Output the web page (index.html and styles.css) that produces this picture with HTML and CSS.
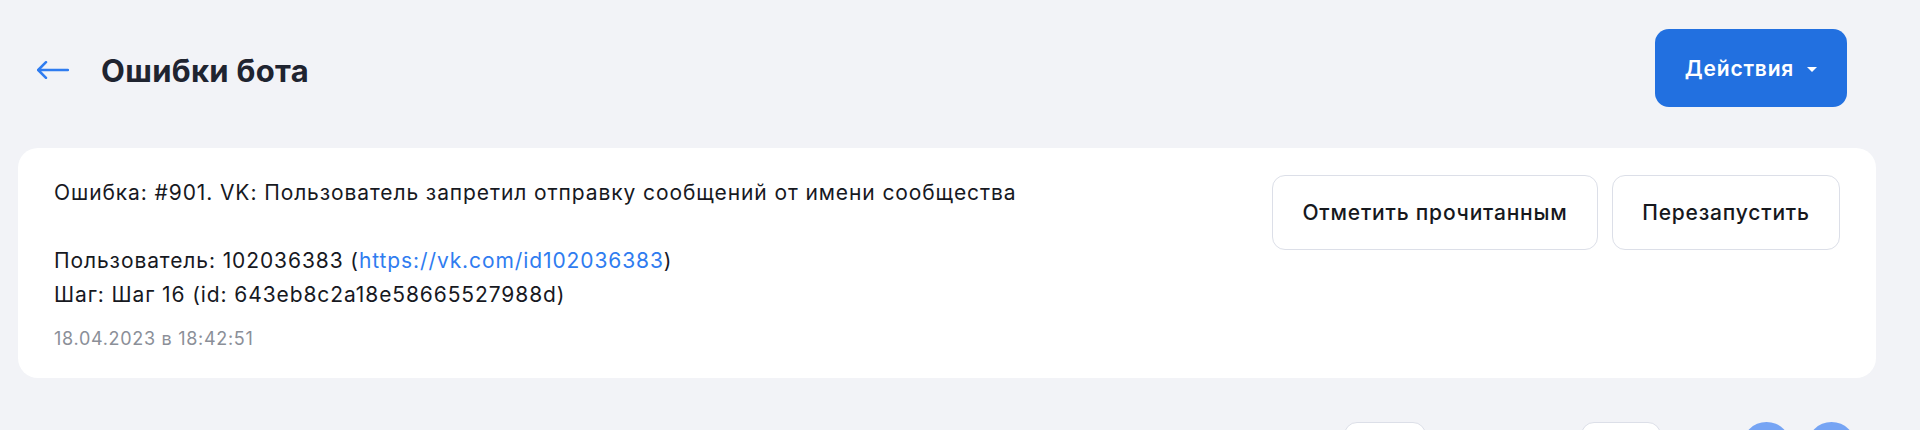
FILE: index.html
```html
<!DOCTYPE html>
<html lang="ru">
<head>
<meta charset="utf-8">
<title>Ошибки бота</title>
<link rel="stylesheet" href="styles.css">
</head>
<body>
<div class="page">
  <header class="header">
    <div class="header-left">
      <a class="back" href="#" aria-label="Назад">
        <svg width="32" height="18" viewBox="0 0 32 18" fill="none" stroke="currentColor" stroke-width="2.5" stroke-linecap="round" stroke-linejoin="round">
          <path d="M9 1.2 L1.2 9 L9 16.8"/>
          <path d="M1.5 9 H31"/>
        </svg>
      </a>
      <h1 class="title">Ошибки бота</h1>
    </div>
    <button class="btn-primary">Действия <span class="caret"></span></button>
  </header>

  <section class="card">
    <div class="card-body">
      <div class="message">
        <div>Ошибка: #901. VK: Пользователь запретил отправку сообщений от имени сообщества</div>
        <div class="blank">&nbsp;</div>
        <div>Пользователь: 102036383 (<a class="link" href="#">https://vk.com/id102036383</a>)</div>
        <div>Шаг: Шаг 16 (id: 643eb8c2a18e58665527988d)</div>
      </div>
      <div class="date">18.04.2023 в 18:42:51</div>
    </div>
    <div class="card-actions">
      <button class="btn-outline btn-read">Отметить прочитанным</button>
      <button class="btn-outline btn-restart">Перезапустить</button>
    </div>
  </section>

  <nav class="pager">
    <span class="pager-box pager-box-a"></span>
    <span class="pager-box pager-box-b"></span>
    <span class="pager-dot"></span>
    <span class="pager-dot"></span>
  </nav>
</div>
</body>
</html>
```

FILE: styles.css
```css
* { box-sizing: border-box; }

html, body {
  margin: 0;
  padding: 0;
  overflow: hidden;
}

body {
  background: #f2f3f7;
  font-family: Inter, "Noto Sans", "Liberation Sans", sans-serif;
  color: #1b1e25;
}

.page {
  height: 430px;
  overflow: hidden;
}

.header {
  display: flex;
  align-items: center;
  justify-content: space-between;
  padding: 29px 73px 0 37px;
}

.header-left {
  display: flex;
  align-items: center;
  gap: 32px;
  padding-top: 4px;
}

.back {
  display: flex;
  color: #2f7cf0;
}

.title {
  margin: 0;
  font-size: 31px;
  font-weight: 700;
  color: #1f2430;
  letter-spacing: 0.3px;
}

.btn-primary {
  display: flex;
  align-items: center;
  gap: 13px;
  height: 78px;
  width: 192px;
  justify-content: center;
  border: none;
  border-radius: 14px;
  background: #2270e0;
  color: #fff;
  font-family: inherit;
  font-size: 21px;
  font-weight: 600;
  letter-spacing: 0.8px;
  padding: 0 20px;
}

.caret {
  width: 0;
  height: 0;
  border-left: 5px solid transparent;
  border-right: 5px solid transparent;
  border-top: 5px solid #fff;
  margin-top: 2px;
}

.card {
  margin: 41px 44px 0 18px;
  background: #fff;
  border-radius: 20px;
  padding: 27px 36px 26px 36px;
  display: flex;
  justify-content: space-between;
  align-items: flex-start;
  height: 230px;
}

.card-body {
  padding-top: 1px;
}

.message {
  font-size: 21px;
  line-height: 34px;
  letter-spacing: 0.9px;
  color: #17191f;
}

.link {
  color: #2f7cf0;
  text-decoration: none;
}

.date {
  margin-top: 15px;
  font-size: 18px;
  line-height: 24px;
  letter-spacing: 0.7px;
  color: #8b8f98;
}

.card-actions {
  display: flex;
  gap: 14px;
}

.btn-outline {
  height: 75px;
  background: #fff;
  border: 1.5px solid #dcdfe8;
  border-radius: 13px;
  font-family: inherit;
  font-size: 21px;
  font-weight: 500;
  letter-spacing: 0.8px;
  color: #16181d;
  padding: 0 16px;
}

.btn-read { width: 326px; }
.btn-restart { width: 228px; }

.pager {
  display: flex;
  align-items: flex-start;
  justify-content: flex-end;
  padding: 44px 64px 0 0;
}

.pager-box {
  width: 82px;
  height: 46px;
  background: #fff;
  border: 1.5px solid #dcdfe8;
  border-radius: 13px;
}

.pager-box-a { margin-right: 155px; }
.pager-box-b { margin-right: 81px; width: 80px; }

.pager-dot {
  width: 49px;
  height: 49px;
  border-radius: 50%;
  background: #76a4f4;
}

.pager-dot + .pager-dot { margin-left: 16px; }
```
